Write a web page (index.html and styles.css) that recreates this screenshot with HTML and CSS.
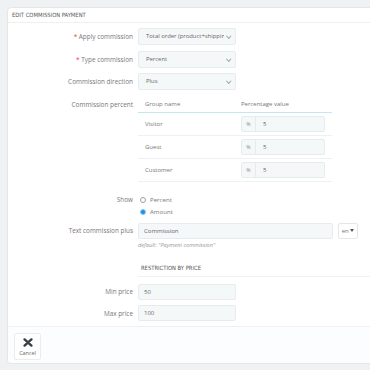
FILE: index.html
```html
<!DOCTYPE html>
<html lang="en">
<head>
  <meta charset="UTF-8" />
  <title>Edit commission payment</title>
  <link rel="stylesheet" href="styles.css">
</head>
<body>

<div class="panel">
  <div class="panel-heading">EDIT COMMISSION PAYMENT</div>

  <div class="form-body">
    <div class="form-row">
      <label class="form-label"><span class="req">*</span> Apply commission</label>
      <div class="select">Total order (product+shippin<span class="chev"></span></div>
    </div>

    <div class="form-row">
      <label class="form-label"><span class="req">*</span> Type commission</label>
      <div class="select">Percent<span class="chev"></span></div>
    </div>

    <div class="form-row">
      <label class="form-label">Commission direction</label>
      <div class="select">Plus<span class="chev"></span></div>
    </div>

    <div class="form-row row-table">
      <label class="form-label">Commission percent</label>
      <div class="group-table">
        <div class="gt-row gt-head">
          <span class="gt-name">Group name</span>
          <span class="gt-value">Percentage value</span>
        </div>
        <div class="gt-row">
          <span class="gt-name">Visitor</span>
          <div class="input-group"><span class="addon">%</span><span class="ig-input">5</span></div>
        </div>
        <div class="gt-row">
          <span class="gt-name">Guest</span>
          <div class="input-group"><span class="addon">%</span><span class="ig-input">5</span></div>
        </div>
        <div class="gt-row">
          <span class="gt-name">Customer</span>
          <div class="input-group"><span class="addon">%</span><span class="ig-input">5</span></div>
        </div>
      </div>
    </div>

    <div class="form-row row-radio">
      <label class="form-label">Show</label>
      <div class="radios">
        <label class="radio"><input type="radio" name="show"> Percent</label>
        <label class="radio"><input type="radio" name="show" checked> Amount</label>
      </div>
    </div>

    <div class="form-row row-text">
      <label class="form-label">Text commission plus</label>
      <div class="control">
        <div class="lang-line">
          <span class="input wide">Commission</span>
          <span class="lang-btn">en <span class="caret"></span></span>
        </div>
        <p class="help">default: "Payment commission"</p>
      </div>
    </div>

    <div class="sub-heading">RESTRICTION BY PRICE</div>

    <div class="form-row">
      <label class="form-label">Min price</label>
      <span class="input short">50</span>
    </div>

    <div class="form-row last">
      <label class="form-label">Max price</label>
      <span class="input short">100</span>
    </div>
  </div>

  <div class="panel-footer">
    <button class="btn-cancel">
      <svg width="10" height="9" viewBox="0 0 10 9"><path d="M1.6 1.4 L8.4 7.6 M8.4 1.4 L1.6 7.6" stroke="#3a3f46" stroke-width="2.4" stroke-linecap="round"/></svg>
      <span>Cancel</span>
    </button>
  </div>
</div>

</body>
</html>
```

FILE: styles.css
```css
* {
  margin: 0;
  padding: 0;
  box-sizing: border-box;
}

html, body {
  width: 100%;
  height: 100%;
  overflow: hidden;
}

body {
  background: #eff1f2;
  font-family: 'Open Sans', sans-serif;
  font-size: 6.4px;
  color: #777;
  padding: 7px 0 0 7px;
}

.panel {
  width: 380px;
  background: #fff;
  border: 1px solid #e4e6e8;
  border-radius: 4px;
}

.panel-heading {
  height: 15px;
  line-height: 14px;
  padding-left: 4px;
  font-family: 'DejaVu Sans Condensed', sans-serif;
  font-size: 5.8px;
  color: #555;
  border-bottom: 1px solid #f0f0f0;
}

.form-body {
  padding: 5px 0 5px 0;
}

.form-row {
  display: flex;
  align-items: center;
  margin-bottom: 5.5px;
}

.form-row.last {
  margin-bottom: 0;
}

.form-label {
  width: 130px;
  text-align: right;
  padding-right: 5px;
  flex-shrink: 0;
  color: #777;
}

.req {
  color: #e8434f;
}

.select {
  width: 98px;
  height: 17px;
  line-height: 15px;
  padding: 0 7px;
  background: #f5f8f9;
  border: 1px solid #e6ecee;
  border-radius: 2px;
  position: relative;
  font-size: 5.9px;
  color: #666;
  white-space: nowrap;
  overflow: hidden;
}

.chev {
  position: absolute;
  right: 1px;
  top: 0;
  width: 10px;
  height: 15px;
  background: #f5f8f9;
}

.chev::after {
  content: "";
  position: absolute;
  left: 3px;
  top: 5px;
  width: 2.5px;
  height: 2.5px;
  border-right: 1px solid #a0a6aa;
  border-bottom: 1px solid #a0a6aa;
  transform: rotate(45deg);
}

.row-table {
  align-items: flex-start;
  margin-bottom: 12px;
}

.row-table .form-label {
  line-height: 17px;
}

.group-table {
  width: 194px;
}

.gt-row {
  display: flex;
  align-items: center;
  height: 23px;
  border-bottom: 1px solid #eef0f2;
  color: #777;
  font-size: 6px;
}

.gt-head {
  height: 17px;
  border-bottom: 1px solid #c4e6f0;
  color: #777;
}

.gt-name {
  width: 103px;
  padding-left: 7px;
}

.input-group {
  display: flex;
  height: 16px;
  border: 1px solid #e6ecee;
  border-radius: 2px;
  background: #f5f8f9;
  width: 84px;
}

.addon {
  width: 14px;
  text-align: center;
  line-height: 14px;
  border-right: 1px solid #e6ecee;
  font-size: 5.2px;
  color: #888;
}

.ig-input {
  line-height: 14px;
  padding-left: 7px;
  color: #666;
}

.input {
  display: block;
  height: 16px;
  line-height: 14px;
  padding: 0 5px;
  background: #f5f8f9;
  border: 1px solid #e6ecee;
  border-radius: 2px;
  font-size: 6px;
  color: #666;
}

.short {
  width: 98px;
}

.row-radio {
  align-items: flex-start;
  margin-bottom: 5px;
}

.row-radio .form-label {
  line-height: 12px;
}

.radios {
  display: flex;
  flex-direction: column;
  padding-left: 2px;
}

.radio {
  display: flex;
  align-items: center;
  height: 12px;
  gap: 4px;
  font-size: 6.1px;
  color: #777;
}

.radio input {
  appearance: none;
  width: 6px;
  height: 6px;
  margin: 0;
  border: 1px solid #9aa3a8;
  border-radius: 50%;
  background: #fff;
}

.radio input:checked {
  border: 1px solid #8cc8ef;
  background: #1f8ee6;
}

.row-text {
  align-items: flex-start;
  margin-bottom: 14px;
}

.row-text .form-label {
  line-height: 16px;
}

.lang-line {
  display: flex;
  align-items: center;
  gap: 5px;
}

.wide {
  width: 195px;
}

.lang-btn {
  display: block;
  width: 20px;
  height: 16px;
  line-height: 14px;
  border: 1px solid #e6e6e6;
  border-radius: 2px;
  background: #fff;
  text-align: center;
  font-size: 6px;
  color: #777;
}

.caret {
  display: inline-block;
  width: 0;
  height: 0;
  border-left: 2.5px solid transparent;
  border-right: 2.5px solid transparent;
  border-top: 3px solid #555;
  vertical-align: 1px;
}

.help {
  font-size: 5.6px;
  line-height: 8px;
  font-style: italic;
  color: #999;
  margin-top: 2px;
}

.sub-heading {
  margin-left: 130px;
  padding: 0 0 3px 3px;
  line-height: 10px;
  font-family: 'DejaVu Sans Condensed', sans-serif;
  font-size: 5.8px;
  border-bottom: 1px solid #f0f0f0;
  margin-bottom: 7px;
  color: #555;
}

.panel-footer {
  height: 37px;
  background: #fcfdfe;
  border-top: 1px solid #f0f0f0;
  border-radius: 0 0 4px 4px;
  padding: 6px 0 0 6px;
}

.btn-cancel {
  width: 27px;
  height: 27px;
  background: #fff;
  border: 1px solid #ececec;
  border-radius: 2px;
  display: flex;
  flex-direction: column;
  align-items: center;
  justify-content: center;
  gap: 2px;
  padding-top: 2px;
  font-family: 'Open Sans', sans-serif;
  font-size: 5.4px;
  color: #666;
}
```
